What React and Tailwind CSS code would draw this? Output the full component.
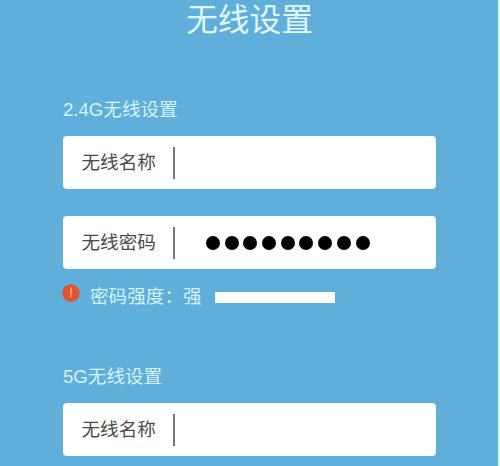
import React, { useState } from 'react'

const Field = ({ label, children }) => (
  <div className="flex h-[53px] items-center rounded-[4px] bg-white pl-[18.5px]">
    <span className="w-[91.5px] pt-[2px] text-[18.6px] leading-none text-[#4b4b4b]">{label}</span>
    <span className="h-[32px] w-[2px] bg-[#777777]" />
    {children}
  </div>
)

const SectionTitle = ({ children }) => (
  <h2 className="h-[27px] text-[18.6px] leading-[27px] text-[#d3f4fb]">{children}</h2>
)

const AlertIcon = () => (
  <svg width="18" height="18" viewBox="0 0 18 18" className="-ml-px mb-[8px] shrink-0">
    <circle cx="9" cy="9" r="8.7" fill="#e5522f" />
    <rect x="8.2" y="3.6" width="1.6" height="7.8" rx="0.5" fill="#ffb08c" />
    <rect x="8.2" y="12.2" width="1.6" height="1.4" rx="0.5" fill="#ffb08c" />
  </svg>
)

const App = () => {
  const [passwordLength] = useState(9)

  return (
    <div className="h-[466px] w-[500px] overflow-hidden border-r-2 border-[#d9eef8] bg-[#60aeda] font-['Liberation_Sans','Noto_Sans_CJK_SC',sans-serif]">
      <h1 className="h-[40px] pl-px text-center text-[31.7px] leading-[40px] text-[#e0f8fd]">无线设置</h1>

      <div className="ml-[63px] w-[373px] pt-[56px]">
        <SectionTitle>2.4G无线设置</SectionTitle>
        <div className="mt-[13px] flex flex-col gap-[27px]">
          <Field label="无线名称" />
          <Field label="无线密码">
            <div className="ml-[31px] flex gap-[4.7px]">
              {Array.from({ length: passwordLength }, (_, i) => (
                <span key={i} className="size-[14px] rounded-full bg-black" />
              ))}
            </div>
          </Field>
        </div>

        <div className="mt-[14px] flex h-[28px] items-center">
          <AlertIcon />
          <span className="ml-[10px] w-[125px] whitespace-nowrap text-[18.6px] leading-[28px] text-[#d3f4fb]">密码强度：强</span>
          <span className="h-[11px] w-[120px] bg-white" />
        </div>

        <div className="mt-[52px]">
          <SectionTitle>5G无线设置</SectionTitle>
          <div className="mt-[13px]">
            <Field label="无线名称" />
          </div>
        </div>
      </div>
    </div>
  )
}

export default App
